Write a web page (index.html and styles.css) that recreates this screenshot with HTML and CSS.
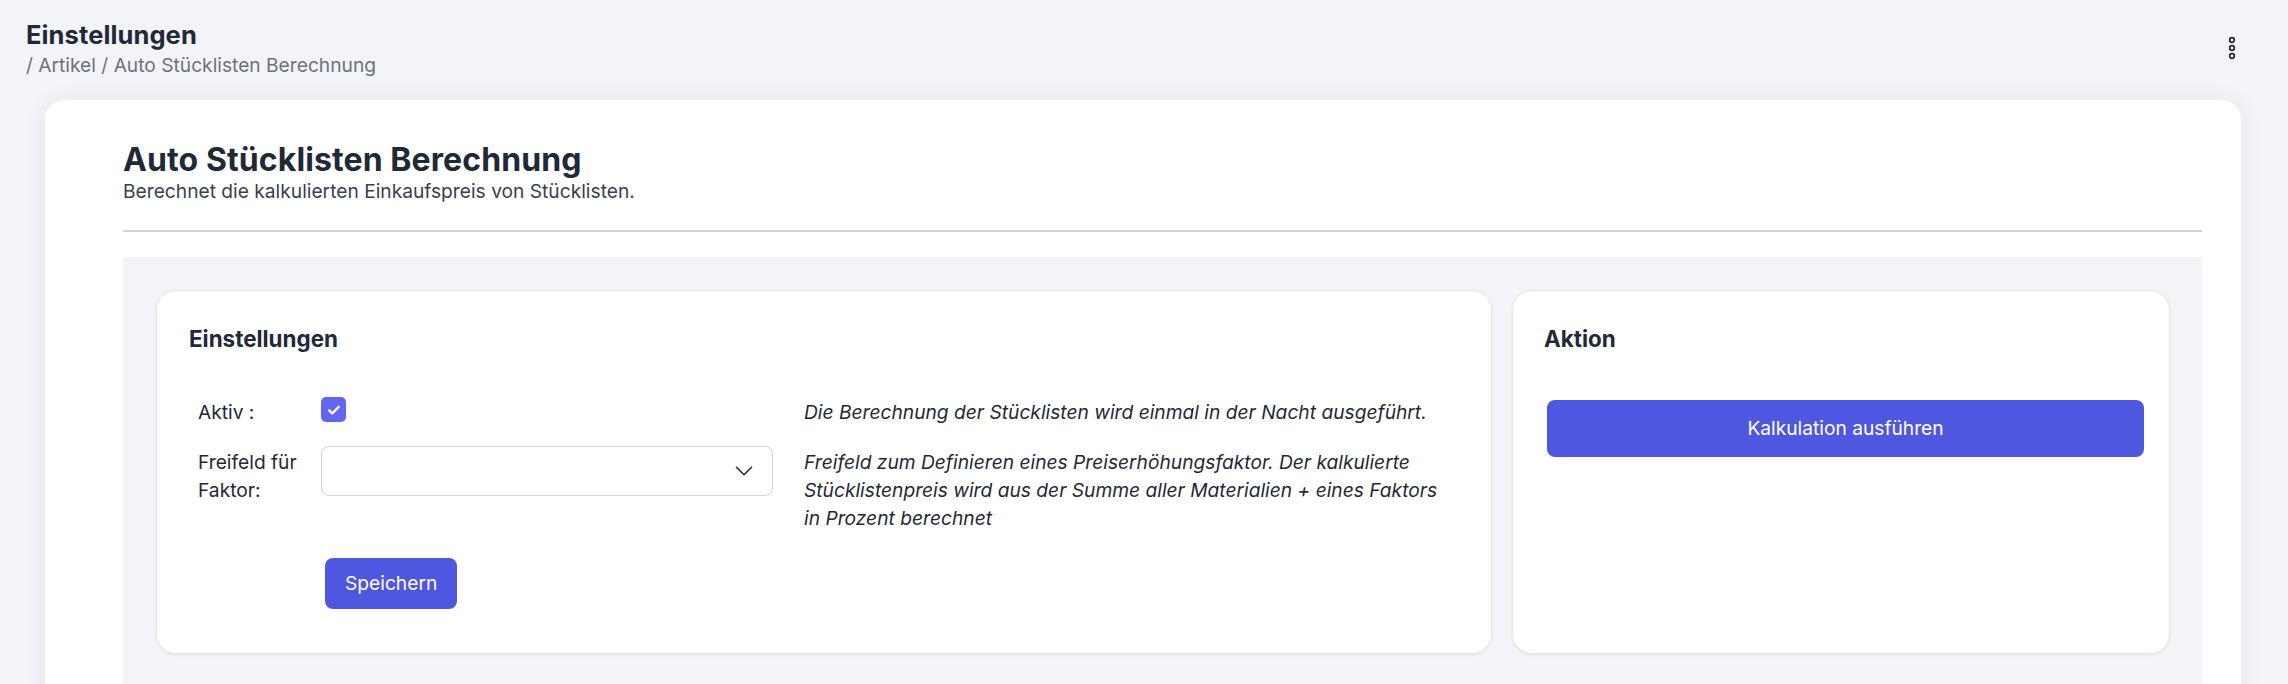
FILE: index.html
```html
<!DOCTYPE html>
<html lang="de">
<head>
<meta charset="utf-8">
<title>Einstellungen</title>
<link rel="stylesheet" href="styles.css">
</head>
<body>
<header class="topbar">
  <div class="topbar-titles">
    <h1 class="topbar-title">Einstellungen</h1>
    <div class="breadcrumb">/ Artikel / Auto Stücklisten Berechnung</div>
  </div>
  <button class="icon-btn" aria-label="Mehr">
    <svg width="24" height="24" viewBox="0 0 24 24" fill="none" stroke="#1f2937" stroke-width="1.7">
      <circle cx="12" cy="4" r="2.3"/>
      <circle cx="12" cy="12" r="2.3"/>
      <circle cx="12" cy="20" r="2.3"/>
    </svg>
  </button>
</header>

<main class="page-card">
  <h2 class="page-title">Auto Stücklisten Berechnung</h2>
  <p class="page-subtitle">Berechnet die kalkulierten Einkaufspreis von Stücklisten.</p>
  <hr class="divider">

  <section class="panel">
    <div class="card card-settings">
      <h3 class="card-title">Einstellungen</h3>
      <div class="form-row row-first">
        <div class="form-label">Aktiv :</div>
        <div class="form-field">
          <span class="checkbox">
            <svg width="16" height="16" viewBox="0 0 16 16" fill="none" stroke="#fff" stroke-width="2.3" stroke-linecap="round" stroke-linejoin="round">
              <path d="M3.2 8.4l3.1 3 6.5-6.6"/>
            </svg>
          </span>
        </div>
        <div class="form-help">Die Berechnung der Stücklisten wird einmal in der Nacht ausgeführt.</div>
      </div>
      <div class="form-row row-second">
        <div class="form-label">Freifeld für Faktor:</div>
        <div class="form-field">
          <div class="select">
            <span class="select-value"></span>
            <svg width="24" height="24" viewBox="0 0 24 24" fill="none" stroke="#1f2937" stroke-width="1.6" stroke-linecap="round" stroke-linejoin="round">
              <path d="M19.5 8.25l-7.5 7.5-7.5-7.5"/>
            </svg>
          </div>
        </div>
        <div class="form-help">Freifeld zum Definieren eines Preiserhöhungsfaktor. Der kalkulierte Stücklistenpreis wird aus der Summe aller Materialien + eines Faktors in Prozent berechnet</div>
      </div>
      <div class="form-actions">
        <button class="btn btn-save">Speichern</button>
      </div>
    </div>

    <div class="card card-action">
      <h3 class="card-title">Aktion</h3>
      <button class="btn btn-run">Kalkulation ausführen</button>
    </div>
  </section>
</main>
</body>
</html>
```

FILE: styles.css
```css
* { box-sizing: border-box; }

html, body {
  margin: 0;
  padding: 0;
  background: #f3f4f7;
  font-family: "Inter", "Noto Sans", "Liberation Sans", sans-serif;
  color: #1f2937;
}

.topbar {
  height: 100px;
  display: flex;
  justify-content: space-between;
  align-items: flex-start;
  padding: 20px 44px 0 26px;
}

.topbar-title {
  margin: 0;
  font-size: 25.5px;
  letter-spacing: 0.1px;
  line-height: 30px;
  font-weight: 700;
  color: #1f2937;
}

.breadcrumb {
  margin-top: 3px;
  font-size: 19.2px;
  line-height: 24px;
  color: #6b7280;
}

.icon-btn {
  margin-top: 16px;
  padding: 0;
  border: 0;
  background: transparent;
  width: 24px;
  height: 24px;
  display: block;
}
.icon-btn svg { display: block; }

.page-card {
  margin: 0 47px 0 45px;
  background: #fff;
  border-radius: 20px 20px 0 0;
  box-shadow: 0 0 26px rgba(17, 24, 39, 0.06);
  padding: 42px 39px 0 78px;
}

.page-title {
  margin: 0;
  font-size: 32px;
  letter-spacing: 0.1px;
  line-height: 36px;
  font-weight: 700;
  color: #1f2937;
}

.page-subtitle {
  margin: 0;
  font-size: 19.2px;
  line-height: 26px;
  color: #374151;
}

.divider {
  margin: 26px 0 0;
  border: 0;
  height: 2px;
  background: #d1d5db;
}

.panel {
  margin-top: 25px;
  background: #f3f4f7;
  padding: 33px 32px 60px 33px;
  display: grid;
  grid-template-columns: repeat(3, 1fr);
  gap: 20px;
}

.card {
  background: #fff;
  border: 1px solid #e5e7eb;
  border-radius: 20px;
  box-shadow: 0 1px 3px rgba(17, 24, 39, 0.07);
}

.card-settings {
  grid-column: span 2;
  padding: 34px 32px 44px 32px;
}

.card-action {
  padding: 34px 32px 32px 31px;
}

.card-title {
  margin: 0;
  font-size: 22.4px;
  line-height: 28px;
  font-weight: 700;
  color: #1f2937;
}

.form-row {
  display: grid;
  grid-template-columns: 132px 452px 671px;
  align-items: start;
  font-size: 19.2px;
  line-height: 28px;
}
.card-title + .form-row { margin-top: 42px; }
.form-row + .form-row { margin-top: 20px; }

.row-first .form-label,
.row-first .form-help { margin-top: 3px; }
.row-first .checkbox { margin-top: 2px; }

.row-second .form-label,
.row-second .form-help { margin-top: 2px; }

.form-label {
  padding-left: 9px;
  padding-right: 8px;
  color: #1f2937;
}

.form-field { display: flex; align-items: center; }

.form-help {
  margin-left: 31px;
  font-style: italic;
  color: #1f2937;
}

.checkbox {
  width: 25px;
  height: 25px;
  border-radius: 5px;
  background: #6366f1;
  display: flex;
  align-items: center;
  justify-content: center;
}
.checkbox svg { display: block; }

.select {
  width: 452px;
  height: 50px;
  border: 1px solid #d1d5db;
  border-radius: 8px;
  background: #fff;
  display: flex;
  align-items: center;
  justify-content: space-between;
  padding: 0 16px 0 14px;
}
.select svg { display: block; }

.form-actions {
  margin-top: 26px;
  padding-left: 136px;
}

.btn {
  font-family: "Inter", "Noto Sans", "Liberation Sans", sans-serif;
  font-size: 19.2px;
  line-height: 27px;
  color: #fff;
  background: #4f56e0;
  border: 0;
  border-radius: 8px;
  cursor: pointer;
}

.btn-save {
  padding: 12px 20px;
  display: inline-block;
}

.btn-run {
  display: block;
  width: calc(100% + 4px);
  margin: 47px 0 0 3px;
  padding: 15px 0;
  text-align: center;
}
```
